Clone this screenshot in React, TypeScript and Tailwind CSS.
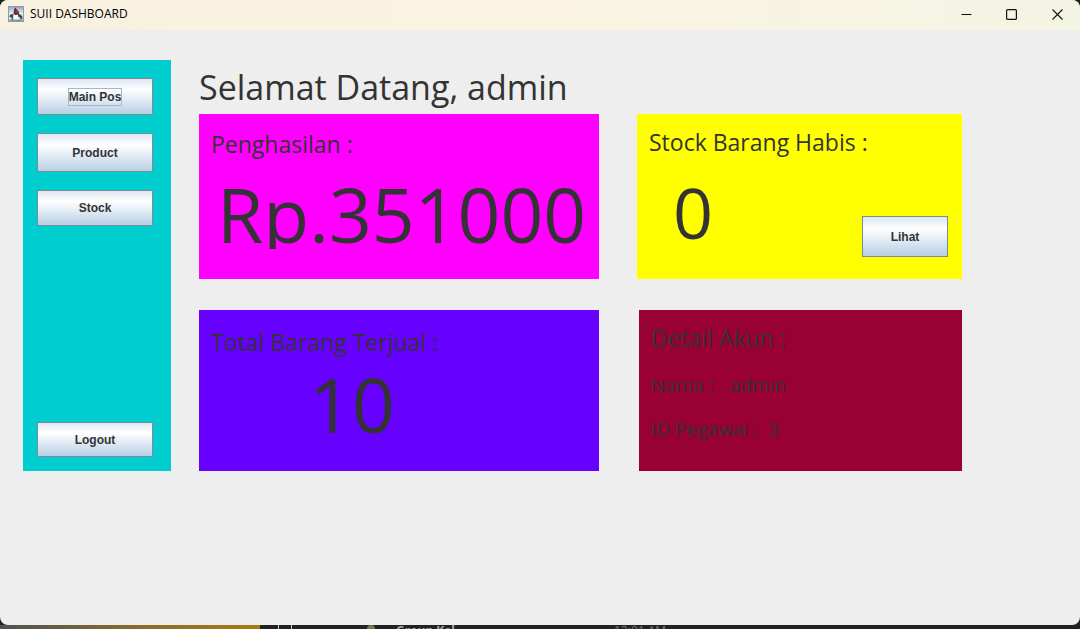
import type { ReactNode } from "react";

function MetalButton({
  children,
  className = "",
  focused = false,
}: {
  children: ReactNode;
  className?: string;
  focused?: boolean;
}) {
  return (
    <button
      type="button"
      className={`flex items-center justify-center border border-[#7a8a99] bg-linear-to-b from-[#dde8f3] via-white via-30% to-[#b8cfe5] font-['Liberation_Sans',Arial,sans-serif] text-xs font-bold text-[#333333] ${className}`}
    >
      <span className={focused ? "outline-1 outline-[#a3b8cc]" : ""}>{children}</span>
    </button>
  );
}

function JavaIcon() {
  return (
    <svg viewBox="0 0 16 16" className="size-4" aria-hidden="true">
      <defs>
        <linearGradient id="tile" x1="0" y1="0" x2="0" y2="1">
          <stop offset="0" stopColor="#8fa3b8" />
          <stop offset="0.45" stopColor="#e6ebf0" />
          <stop offset="0.8" stopColor="#d5dce3" />
          <stop offset="1" stopColor="#8796a6" />
        </linearGradient>
      </defs>
      <rect x="0.5" y="0.5" width="15" height="15" fill="url(#tile)" stroke="#8d9aa8" />
      <path d="M1.500 11 2 8.800l3.400-.8 1.200 1.200-1 2.200 1 1.800-3.400.6 1-2z" fill="#39434d" />
      <path d="M5.800 8c-.8 2-.9 4-.4 5.800h5.200c.5-2 .2-4.200-1-5.800z" fill="#fafbfc" />
      <path d="M9.800 7.800l2.600.6 1.800 1.800.2 2.800-1.600.6-.6-2.200-1.800-.4z" fill="#39434d" />
      <path d="M7 1.500 5.400 7l1.800 2 3-.4 1-2.400z" fill="#26272e" />
      <path d="M6.600 5c.9-1.400 3.300-1.200 3.700.5.300 1.600-1.500 2.600-2.900 1.800C6.300 6.800 6.100 5.900 6.600 5z" fill="#c41f30" />
      <path d="M3 14.200h10" stroke="#67788a" strokeWidth="0.8" />
    </svg>
  );
}

function TitleBar() {
  return (
    <header className="flex h-[30px] items-center justify-between bg-linear-to-r from-[#f8f1e0] via-[#faf3e2] to-[#f4f4e4] pl-2">
      <div className="flex items-center gap-1.5 pb-0.5">
        <JavaIcon />
        <span className="font-['Open_Sans','Noto_Sans',sans-serif] text-xs leading-4 text-black">
          SUII DASHBOARD
        </span>
      </div>
      <div className="flex h-full pb-0.5">
        <button type="button" aria-label="Minimize" className="flex w-[45px] items-center justify-center">
          <svg viewBox="0 0 11 11" className="size-[11px]" fill="none" stroke="#111">
            <path d="M0.500 5.500h10" />
          </svg>
        </button>
        <button type="button" aria-label="Maximize" className="flex w-[45px] items-center justify-center">
          <svg viewBox="0 0 11 11" className="size-[11px]" fill="none" stroke="#111" strokeWidth="1.200">
            <rect x="0.600" y="0.600" width="9.800" height="9.800" rx="1" />
          </svg>
        </button>
        <button type="button" aria-label="Close" className="flex w-[46px] items-center justify-center">
          <svg viewBox="0 0 11 11" className="size-[11px]" fill="none" stroke="#111" strokeWidth="1.100">
            <path d="M0.500 0.500l10 10M10.500 0.500l-10 10" />
          </svg>
        </button>
      </div>
    </header>
  );
}

function CardTitle({ children }: { children: ReactNode }) {
  return <h2 className="text-[23px] leading-8">{children}</h2>;
}

function DesktopStrip() {
  return (
    <div className="flex h-1 overflow-hidden bg-[#222225] font-['Open_Sans','Noto_Sans',sans-serif] text-xs leading-3 text-[#a8a8a8]">
      <div className="w-[260px] shrink-0 bg-linear-to-r from-[#4d5350] via-[#876a2c] to-[#a97c0c]" />
      <div className="ml-[18px] w-3.5 shrink-0 border-x border-[#c8c8c8]" />
      <div className="ml-[75px] size-2 shrink-0 rounded-full bg-[#747a4c]" />
      <span className="ml-[21px] w-[218px] shrink-0 font-bold">Group Kel</span>
      <span className="shrink-0 text-[#777777]">12:01 AM</span>
    </div>
  );
}

export default function App() {
  return (
    <div className="flex min-h-screen flex-col bg-[#222225]">
      <div className="flex flex-1 flex-col overflow-hidden rounded-lg bg-[#eeeeee]">
        <TitleBar />
        <div className="flex gap-7 pt-[30px] pr-[118px] pb-8 pl-[23px] text-[#333333]">
          <nav className="flex w-[148px] shrink-0 flex-col gap-[18px] bg-[#00cdcd] pt-[18px] pr-[18px] pb-3.5 pl-3.5">
            <MetalButton className="h-[37px]" focused>
              Main Pos
            </MetalButton>
            <MetalButton className="h-[39px]">Product</MetalButton>
            <MetalButton className="h-9">Stock</MetalButton>
            <MetalButton className="mt-auto h-[35px]">Logout</MetalButton>
          </nav>
          <main className="min-w-0 flex-1 font-['Open_Sans','Noto_Sans',sans-serif]">
            <h1 className="h-[54px] text-[34px] leading-[54px] whitespace-nowrap">Selamat Datang, admin</h1>
            <div className="grid grid-cols-[minmax(0,400fr)_minmax(0,325fr)] gap-x-[38px] gap-y-[31px]">
              <section className="h-[165px] bg-[#ff00ff] px-3 pt-3.5">
                <CardTitle>Penghasilan :</CardTitle>
                <p className="mt-2 h-[81px] overflow-hidden pl-1.5 text-[75px] leading-[92px]">Rp.351000</p>
              </section>
              <section className="flex h-[165px] flex-col bg-[#ffff00] px-3 pt-3">
                <CardTitle>Stock Barang Habis :</CardTitle>
                <div className="flex items-start justify-between">
                  <p className="mt-2 pl-6 text-[70px] leading-[92px]">0</p>
                  <MetalButton className="mt-[58px] mr-0.5 h-[41px] w-[86px]">Lihat</MetalButton>
                </div>
              </section>
              <section className="h-[161px] bg-[#6600ff] px-3 pt-4">
                <CardTitle>Total Barang Terjual :</CardTitle>
                <p className="pl-[98px] text-[75px] leading-[92px]">10</p>
              </section>
              <section className="ml-0.5 h-[161px] bg-[#990033] px-3 pt-3">
                <CardTitle>Detail Akun :</CardTitle>
                <dl className="mt-4 text-[19px] leading-[30px]">
                  <div className="flex gap-4">
                    <dt>Nama :</dt>
                    <dd>admin</dd>
                  </div>
                  <div className="mt-3.5 flex gap-2.5">
                    <dt>ID Pegawai :</dt>
                    <dd>3</dd>
                  </div>
                </dl>
              </section>
            </div>
          </main>
        </div>
      </div>
      <DesktopStrip />
    </div>
  );
}
